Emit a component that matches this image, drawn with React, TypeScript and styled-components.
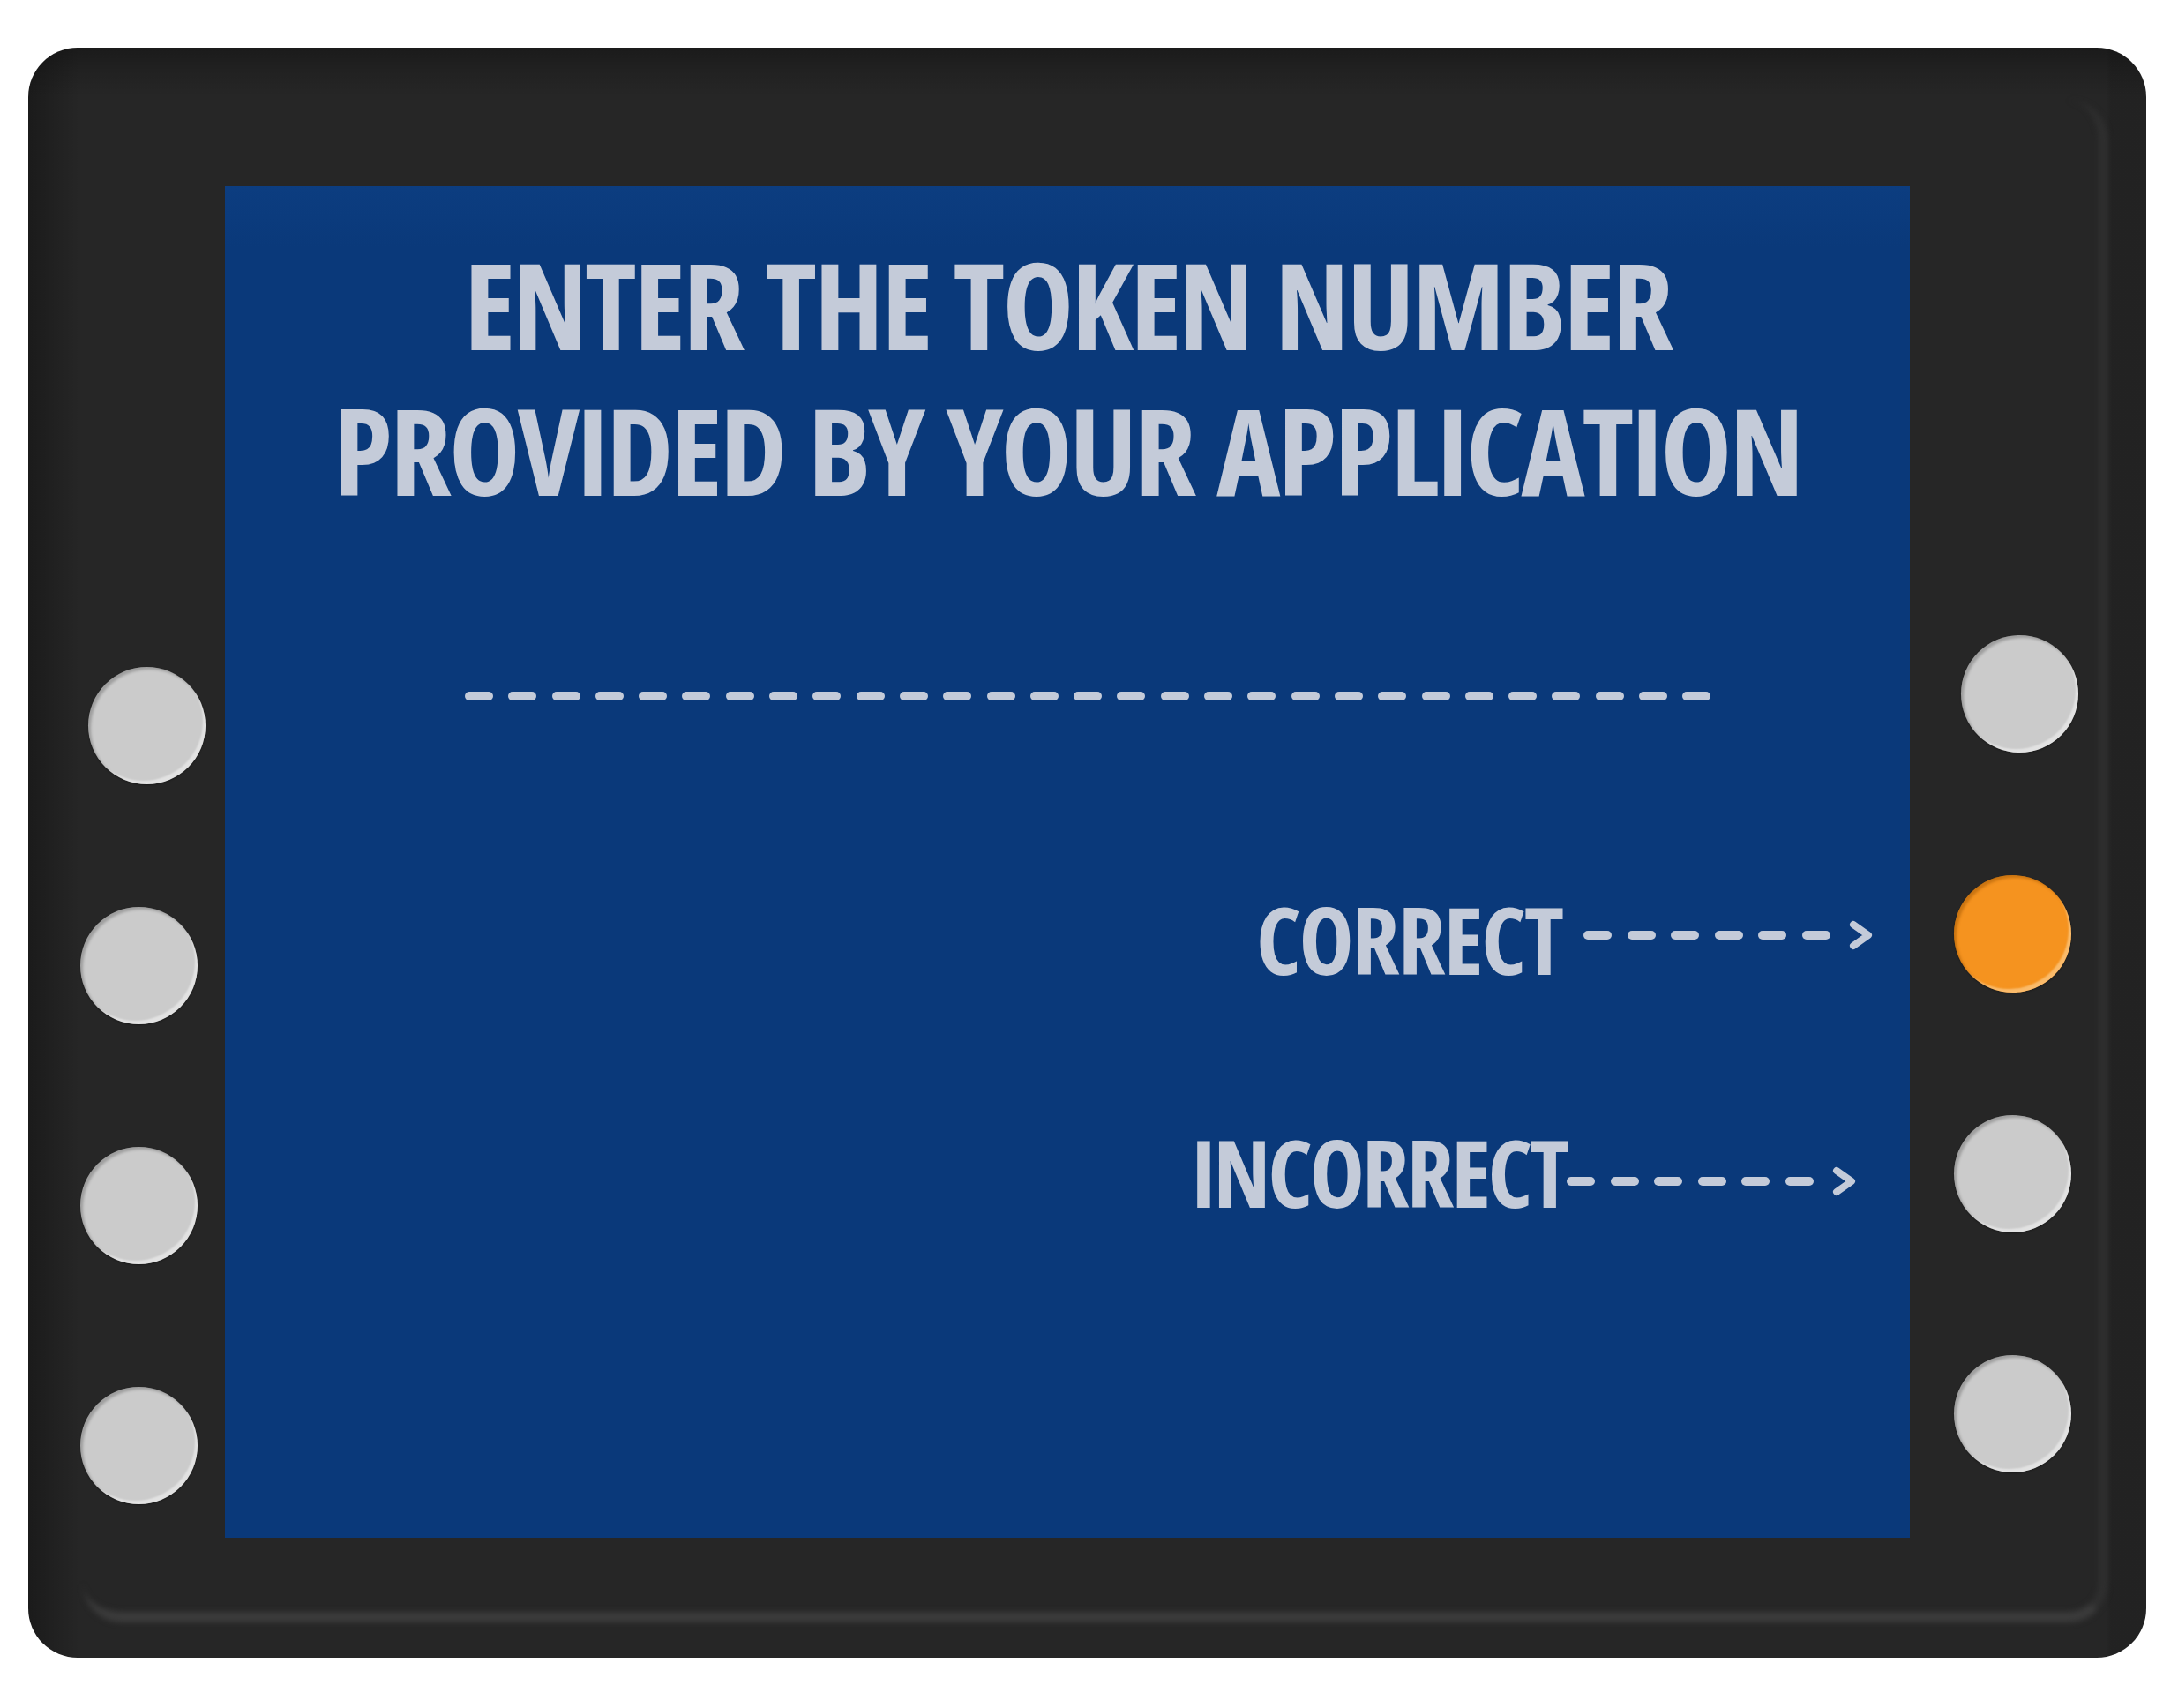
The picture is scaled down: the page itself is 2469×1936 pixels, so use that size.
import React from "react";
import styled, { createGlobalStyle } from "styled-components";

const GlobalStyle = createGlobalStyle`
  html, body {
    margin: 0;
    padding: 0;
    background: #ffffff;
  }
  #root {
    width: 2469px;
    height: 1936px;
  }
`;

const Page = styled.main`
  box-sizing: border-box;
  width: 2469px;
  height: 1936px;
  padding: 54px 36px 57px 32px;
  display: flex;
`;

/* The dark bezel of the terminal */
const Housing = styled.section`
  position: relative;
  flex: 1;
  display: grid;
  grid-template-columns: 223px 1910px 1fr;
  padding: 157px 0 136px;
  border-radius: 56px;
  overflow: hidden;
  background:
    linear-gradient(to bottom, rgba(0, 0, 0, 0.3) 0px, rgba(0, 0, 0, 0.12) 28px, rgba(0, 0, 0, 0) 56px),
    linear-gradient(to right, rgba(0, 0, 0, 0.3) 0px, rgba(0, 0, 0, 0.14) 30px, rgba(0, 0, 0, 0.06) 48px, rgba(0, 0, 0, 0) 58px),
    linear-gradient(to left, rgba(0, 0, 0, 0.1) 0px, rgba(0, 0, 0, 0.1) 40px, rgba(0, 0, 0, 0) 46px),
    #262626;

  /* soft highlight along the inner lip of the bezel */
  &::after {
    content: "";
    position: absolute;
    left: 62px;
    top: 60px;
    right: 44px;
    bottom: 40px;
    border-radius: 44px;
    border-right: 10px solid #2f2f2f;
    border-bottom: 12px solid #3b3b3b;
    filter: blur(3px);
    pointer-events: none;
  }
`;

const KeyColumn = styled.div<{ $top: number; $left: number }>`
  position: relative;
  z-index: 1;
  display: flex;
  flex-direction: column;
  align-items: flex-start;
  gap: 139px;
  padding-top: ${(p) => p.$top}px;
  padding-left: ${(p) => p.$left}px;
`;

const Key = styled.button<{ $lit?: boolean; $nudge?: number }>`
  width: 133px;
  height: 133px;
  padding: 0;
  border: none;
  border-radius: 50%;
  margin-left: ${(p) => p.$nudge ?? 0}px;
  background: ${(p) => (p.$lit ? "#f5931f" : "#cbcbcb")};
  box-shadow:
    inset 3px 3px 3px ${(p) => (p.$lit ? "rgba(150, 80, 0, 0.45)" : "rgba(0, 0, 0, 0.22)")},
    inset -4px -5px 2px -1px ${(p) => (p.$lit ? "rgba(255, 220, 170, 0.55)" : "rgba(255, 255, 255, 0.45)")},
    0 1px 2px rgba(0, 0, 0, 0.35);
  cursor: pointer;
`;

const Screen = styled.div`
  position: relative;
  z-index: 1;
  display: flex;
  flex-direction: column;
  padding-top: 51px;
  background: linear-gradient(to bottom, #0c3d80 0px, #0a397a 70px, #0a397a 100%);
  color: #c4cbd9;
  font-family: "Open Sans", "Liberation Sans", sans-serif;
  font-stretch: 75%;
  font-weight: 700;
`;

const Prompt = styled.h1`
  margin: 0;
  display: flex;
  flex-direction: column;
  align-items: center;
  font-size: 137px;
  font-weight: 700;
  letter-spacing: -3.2px;
  word-spacing: 5px;
`;

const PromptLine = styled.span`
  display: block;
  height: 165px;
  line-height: 165px;
  white-space: nowrap;
`;

const EntryLine = styled.div`
  display: flex;
  gap: 17.3px;
  margin-top: 192px;
  padding-left: 272px;
`;

const Dash = styled.span`
  flex: none;
  width: 32px;
  height: 10px;
  border-radius: 5px;
  background: #c4cbd9;
`;

const Option = styled.div<{ $top: number; $right: number; $gap: number }>`
  display: flex;
  align-items: center;
  justify-content: flex-end;
  gap: ${(p) => p.$gap}px;
  height: 120px;
  margin-top: ${(p) => p.$top}px;
  padding-right: ${(p) => p.$right}px;
`;

const OptionLabel = styled.span<{ $tracking: number }>`
  font-size: 105px;
  line-height: 120px;
  letter-spacing: ${(p) => p.$tracking}px;
  white-space: nowrap;
`;

const Leader = styled.span<{ $drop: number }>`
  display: flex;
  align-items: center;
  gap: 17.5px;
  margin-top: ${(p) => p.$drop * 2}px;
`;

const Chevron = styled.svg`
  flex: none;
  margin-left: 4px;
`;

const LeaderArrow: React.FC<{ drop: number }> = ({ drop }) => (
  <Leader $drop={drop}>
    {Array.from({ length: 6 }, (_, i) => (
      <Dash key={i} />
    ))}
    <Chevron width="27" height="34" viewBox="0 0 27 34">
      <polyline
        points="5,5 22,17 5,29"
        fill="none"
        stroke="#c4cbd9"
        strokeWidth="8"
        strokeLinecap="round"
        strokeLinejoin="round"
      />
    </Chevron>
  </Leader>
);

export default function App() {
  return (
    <>
      <GlobalStyle />
      <Page>
        <Housing>
          <KeyColumn $top={545} $left={59}>
            <Key aria-label="Left key 1" $nudge={9} />
            <Key aria-label="Left key 2" />
            <Key aria-label="Left key 3" />
            <Key aria-label="Left key 4" />
          </KeyColumn>

          <Screen>
            <Prompt>
              <PromptLine>ENTER THE TOKEN NUMBER</PromptLine>
              <PromptLine>PROVIDED BY YOUR APPLICATION</PromptLine>
            </Prompt>
            <EntryLine>
              {Array.from({ length: 29 }, (_, i) => (
                <Dash key={i} />
              ))}
            </EntryLine>
            <Option $top={211} $right={42} $gap={24}>
              <OptionLabel $tracking={-2}>CORRECT</OptionLabel>
              <LeaderArrow drop={-5} />
            </Option>
            <Option $top={144} $right={61} $gap={0}>
              <OptionLabel $tracking={-3.2}>INCORRECT</OptionLabel>
              <LeaderArrow drop={10} />
            </Option>
          </Screen>

          <KeyColumn $top={509} $left={50}>
            <Key aria-label="Right key 1" $nudge={8} />
            <Key aria-label="Correct" $lit />
            <Key aria-label="Incorrect" />
            <Key aria-label="Right key 4" />
          </KeyColumn>
        </Housing>
      </Page>
    </>
  );
}
